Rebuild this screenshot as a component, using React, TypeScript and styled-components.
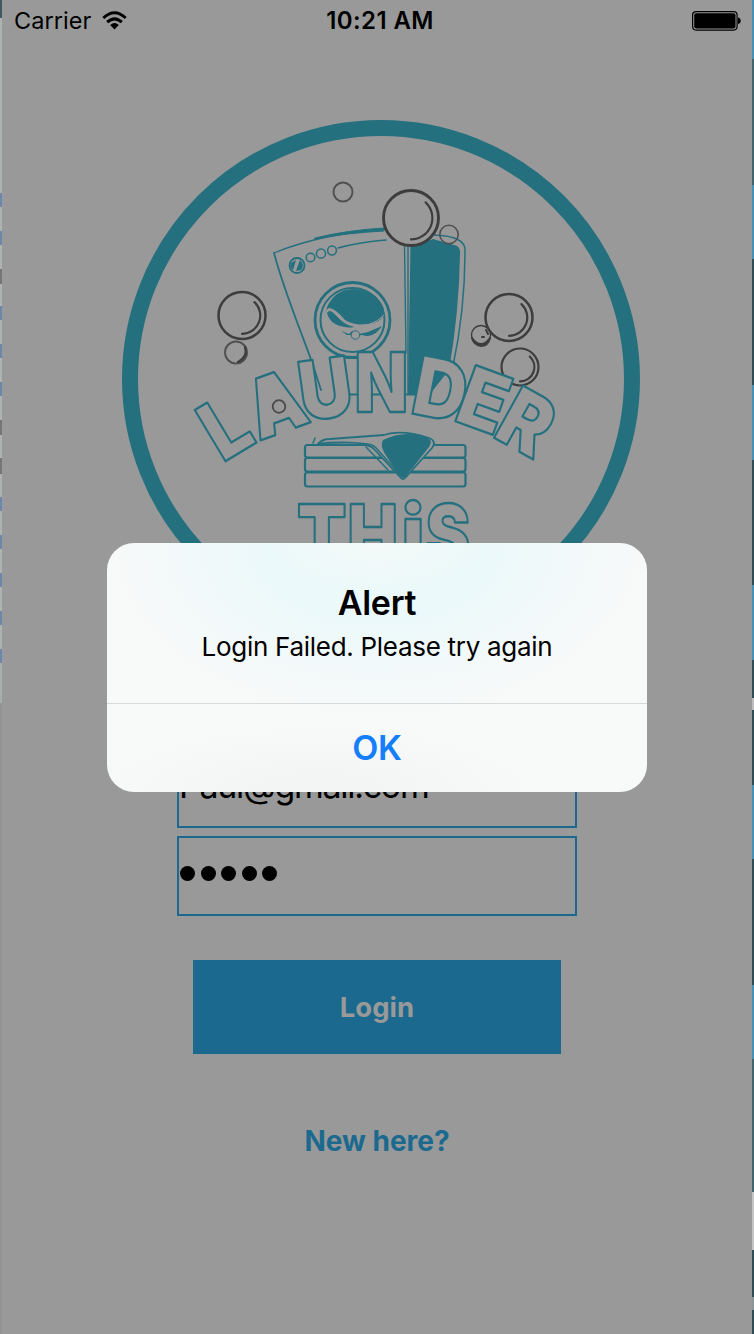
import React from "react";
import styled, { createGlobalStyle } from "styled-components";

const TEAL = "#24707f";
const BLUE = "#1b698e";
const GREY = "#999999";

const GlobalStyle = createGlobalStyle`
  * { box-sizing: border-box; }
  body { margin: 0; background: ${GREY}; }
  button { border: 0; padding: 0; background: none; font: inherit; }
`;

const Desktop = styled.div`
  position: relative;
  display: grid;
  grid-template-columns: 2px 750px 2px;
  width: 754px;
  height: 1334px;
  overflow: hidden;
  font-family: Inter, "Liberation Sans", sans-serif;
  color: #000;
`;

const Edge = styled.div`
  display: flex;
  flex-direction: column;
`;

const Segment = styled.div<{ $h: number; $c: string }>`
  flex: 0 0 ${(p) => p.$h}px;
  background: ${(p) => p.$c};
`;

const Screen = styled.main`
  display: flex;
  flex-direction: column;
  align-items: center;
  background: ${GREY};
  border-bottom-left-radius: 6px;
`;

const StatusBar = styled.header`
  display: grid;
  grid-template-columns: 1fr auto 1fr;
  align-items: center;
  width: 100%;
  height: 40px;
  padding: 1px 11px 0 12px;
`;

const Carrier = styled.div`
  display: flex;
  align-items: center;
  gap: 11px;
  font-size: 23.5px;
  line-height: 40px;
  letter-spacing: 0.05px;
`;

const Clock = styled.div`
  padding-left: 5px;
  font-size: 24px;
  line-height: 40px;
  font-weight: 600;
  letter-spacing: 0.4px;
`;

const Battery = styled.svg`
  justify-self: end;
`;

const Logo = styled.svg`
  flex: none;
  width: 520px;
  height: 520px;
  margin: 79px 0 0 8px;
`;

const Form = styled.form`
  display: flex;
  flex-direction: column;
  align-items: center;
  gap: 8px;
  margin-top: 109px;
`;

const Field = styled.div`
  display: flex;
  align-items: center;
  width: 400px;
  height: 80px;
  padding-bottom: 5px;
  border: 2px solid ${BLUE};
  font-size: 34px;
  letter-spacing: -1.3px;
`;

const Dots = styled.div`
  display: flex;
  gap: 5.5px;
  padding-left: 1px;
`;

const Dot = styled.span`
  width: 15px;
  height: 15px;
  border-radius: 50%;
  background: #000;
`;

const LoginButton = styled.button`
  width: 368px;
  height: 94px;
  margin-top: 36px;
  background: ${BLUE};
  color: ${GREY};
  font-size: 27.5px;
  font-weight: 700;
`;

const SignUp = styled.button`
  margin-top: 70px;
  color: ${BLUE};
  font-size: 28px;
  line-height: 35px;
  font-weight: 700;
`;

const AlertBox = styled.section`
  position: absolute;
  left: 107px;
  top: 543px;
  display: flex;
  flex-direction: column;
  width: 540px;
  height: 249px;
  border-radius: 27px;
  overflow: hidden;
  background:
    radial-gradient(ellipse 130px 55px at 270px 0, rgba(244, 250, 248, 0.9), rgba(244, 250, 248, 0)),
    radial-gradient(ellipse 270px 175px at 270px 0, #ebf9fa 40%, rgba(243, 249, 250, 0) 100%),
    radial-gradient(ellipse 230px 70px at 210px 249px, #f2f4f3, rgba(242, 244, 243, 0)),
    #f8f9f9;
`;

const AlertBody = styled.div`
  flex: 0 0 160px;
  padding-top: 38px;
  text-align: center;
`;

const AlertTitle = styled.h1`
  margin: 0;
  font-size: 34px;
  line-height: 44px;
  font-weight: 600;
  letter-spacing: -0.3px;
`;

const AlertText = styled.p`
  margin: 4px 0 0;
  font-size: 26px;
  line-height: 35px;
  letter-spacing: -0.29px;
`;

const AlertAction = styled.button`
  flex: 1;
  padding-bottom: 1px;
  border-top: 1px solid #d5d9d9;
  color: #147efb;
  font-size: 34px;
  font-weight: 600;
  letter-spacing: -0.3px;
`;

const Letter = styled.text`
  font-family: Inter, "Open Sans", sans-serif;
  font-weight: 900;
  font-size: 82px;
  fill: ${GREY};
  stroke: ${TEAL};
  stroke-width: 2.2px;
  stroke-linejoin: round;
  vector-effect: non-scaling-stroke;
`;

type Seg = [number, string];

const LIGHT = "#aeb2b2";
const MARK = "#6d87ac";
const leftEdge: Seg[] = [
  [18, "#3d5a63"], [175, LIGHT],
  [14, MARK], [24, LIGHT], [14, MARK], [24, LIGHT], [15, "#777577"], [22, LIGHT],
  [14, MARK], [24, LIGHT], [14, MARK], [24, LIGHT], [14, MARK], [24, LIGHT],
  [15, "#777577"], [23, LIGHT], [16, "#777577"], [23, LIGHT],
  [14, MARK], [24, LIGHT], [14, MARK], [24, LIGHT], [14, MARK], [24, LIGHT],
  [14, MARK], [24, LIGHT], [14, MARK], [40, "#a9adad"], [631, "#929494"],
];

const SKY = "#4790b5";
const SLATE = "#42656d";
const DEEP = "#304d55";
const rightEdge: Seg[] = [
  [59, SKY], [126, SLATE], [74, SKY], [126, DEEP], [75, SKY], [125, DEEP], [75, SKY],
  [38, DEEP], [12, "#bdbdbd"], [75, DEEP], [74, SKY], [126, DEEP], [74, SKY],
  [133, SLATE], [58, "#c4c4c4"], [47, DEEP], [13, "#8b9698"], [24, DEEP],
];

const letters: { ch: string; x: number; y: number; r: number; sx: number }[] = [
  { ch: "L", x: 222.5, y: 463, r: -31, sx: 0.9 },
  { ch: "A", x: 259, y: 441, r: -20, sx: 0.87 },
  { ch: "U", x: 303, y: 421.5, r: -8, sx: 0.9 },
  { ch: "N", x: 354.5, y: 412, r: 0, sx: 0.85 },
  { ch: "D", x: 409, y: 413, r: 11, sx: 0.9 },
  { ch: "E", x: 452, y: 420, r: 20, sx: 0.93 },
  { ch: "R", x: 491, y: 436, r: 29, sx: 0.9 },
  { ch: "T", x: 297, y: 564, r: 0, sx: 0.88 },
  { ch: "H", x: 347.5, y: 564, r: 0, sx: 0.82 },
  { ch: "i", x: 401.5, y: 564, r: 0, sx: 0.95 },
  { ch: "S", x: 425.5, y: 564, r: 0, sx: 0.82 },
];

const bubbles = [
  { x: 411, y: 218, r: 27.5, w: 2.9, shine: true },
  { x: 242, y: 315.5, r: 23.5, w: 2.5, shine: true },
  { x: 509, y: 317.5, r: 23.5, w: 2.5, shine: true },
  { x: 520, y: 367, r: 18.5, w: 2.2, shine: true },
  { x: 343, y: 192, r: 9.5, w: 1.9, shine: false },
  { x: 449, y: 234.5, r: 9.2, w: 1.6, shine: false },
  { x: 236, y: 352.5, r: 11, w: 1.9, shine: false },
];

function EdgeStrip({ parts }: { parts: Seg[] }) {
  return (
    <Edge>
      {parts.map(([h, c], i) => (
        <Segment key={i} $h={h} $c={c} />
      ))}
    </Edge>
  );
}

function BrandLogo() {
  return (
    <Logo viewBox="121 119 520 520" fill="none" stroke={TEAL} strokeLinecap="round" strokeLinejoin="round">
      <circle cx="381" cy="379" r="251" strokeWidth="16" />

      {/* washing machine */}
      <path d="M274 253 Q320 234 384 229" strokeWidth="1.3" />
      <path d="M315 238 Q348 230 384 228 L384 231 Q346 233 315 239Z" fill={TEAL} strokeWidth="1" />
      <path d="M338 248 Q360 242 386 240" strokeWidth="1.5" />
      <path d="M274 253 C284 291 302 334 313 365 L321 390" strokeWidth="1.8" />
      <path d="M404.500 246 L406 353 M408 246 L408 393" strokeWidth="1.4" />
      <path d="M410.500 246 L433 239 L454 245 Q461 246 460 255 Q459 313 449 370 L430 394 H408Z" fill={TEAL} stroke="none" />
      <path d="M434 235 Q466 236 465 251 Q465 310 453 366" strokeWidth="1.5" />
      <path d="M350 394.500H420 M347 358H361" strokeWidth="2" />
      <circle cx="297" cy="265.500" r="7.500" strokeWidth="1.8" />
      <path d="M300 260 L296 271 L301 270 Q305 265 300 260Z M291 263 L296 260 L293 270 Q289 267 291 263Z" fill={TEAL} stroke="none" />
      <circle cx="310.500" cy="257.500" r="4.300" strokeWidth="1.5" />
      <circle cx="321" cy="253.500" r="4.600" strokeWidth="1.5" />
      <circle cx="332" cy="250.500" r="4.400" strokeWidth="1.5" />
      <circle cx="352.500" cy="320" r="37.500" fill={GREY} strokeWidth="2.800" />
      <circle cx="352.500" cy="320" r="32" strokeWidth="2" />
      <path d="M325 313 Q332 289 354 289 Q377 290 384 309 Q385 319 374 323 Q356 327 345 320 Q335 308 329 308 Q325 310 325 313Z" fill={TEAL} stroke="none" />
      <path d="M327 313 Q330 325 345 327 Q350 328 354 327 Q342 323 336 315 Q330 308 327 313Z" fill={TEAL} stroke="none" />
      <path d="M326 312 C331 304 338 322 350 325 Q371 329 384 315" stroke={GREY} strokeWidth="1" />
      <path d="M341 331 L349 334 L352 331 L359 334 L368 332 L382 326 Q374 339 362 335 L347 335Z" fill={TEAL} stroke="none" />
      <circle cx="355.500" cy="335" r="4.300" fill={GREY} strokeWidth="1" />

      {/* bubbles */}
      <g stroke="#3d3d3d">
        {bubbles.map((b, i) => (
          <g key={i} transform={`translate(${b.x} ${b.y})`}>
            <circle r={b.r} strokeWidth={b.w} fill={b.r === 27.5 ? GREY : "none"} stroke={b.shine ? "#3d3d3d" : "#505050"} />
            {b.shine && (
              <path
                strokeWidth="2.2"
                d={`M${b.r * 0.53} ${-b.r * 0.57} A${b.r * 0.78} ${b.r * 0.78} 0 0 1 0 ${b.r * 0.78}`}
              />
            )}
          </g>
        ))}
        <path d="M245 347 Q248 357 238 362" strokeWidth="2.200" />
        <circle cx="481" cy="335" r="9.500" strokeWidth="1.400" />
        <path d="M472 338 Q481 350 490 338 Q488 346 481 346 Q474 345 472 338Z M482 337 L484 337 M486 330 L488 334" strokeWidth="2" fill="#303030" />
      </g>

      {letters.map((l) => (
        <g key={l.ch} transform={`translate(${l.x} ${l.y}) rotate(${l.r})`}>
          <Letter transform={`scale(${l.sx} 1)`}>{l.ch}</Letter>
          {l.ch === "A" && <path d="M27 -49 H31 L38 -21 H20Z" fill={GREY} stroke={GREY} strokeWidth="3" />}
        </g>
      ))}
      <circle cx="279" cy="406.500" r="6.300" stroke="#4a4a4a" strokeWidth="1.800" />

      {/* folded towels */}
      <g strokeWidth="2.200">
        <rect x="305" y="445" width="160.500" height="12.500" rx="2.500" />
        <rect x="305" y="458" width="160.500" height="13.500" rx="2.500" />
        <rect x="305" y="472.500" width="160.500" height="14" rx="2.500" />
      </g>
      <path d="M318 444 Q322 439 330 439 L384 435 Q402 429 429 438 Q437 441 432 448 L406 477 Q403 481 400 477 L374 449 Q370 445 364 445 L318 444Z" fill={GREY} strokeWidth="1.800" />
      <path d="M318 443.500 Q345 441 368 444 Q373 444 378 450 L401 476 M366 447 L388 470 M313 443 L315 438" strokeWidth="1.500" />
      <path d="M383 440 Q405 429 428 438 Q433 441 429 447 L407 475 Q403 481 399 475 L387 457 Q379 446 383 440Z" fill={TEAL} stroke="none" />
    </Logo>
  );
}

export default function App() {
  return (
    <>
      <GlobalStyle />
      <Desktop>
        <EdgeStrip parts={leftEdge} />
        <Screen>
          <StatusBar>
            <Carrier>
              Carrier
              <svg width="25" height="20" viewBox="0 0 25 20" fill="none" stroke="#000" strokeWidth="3">
                <path d="M1.300 7 Q12.500 -3.500 23.700 7" />
                <path d="M5.200 11.200 Q12.500 4.500 19.800 11.200" />
                <path d="M8.200 14 Q12.500 10.200 16.800 14 L12.500 18.600Z" fill="#000" stroke="none" />
              </svg>
            </Carrier>
            <Clock>10:21 AM</Clock>
            <Battery width="49" height="20" viewBox="0 0 49 20">
              <rect x="0.600" y="0.600" width="44.500" height="18.500" rx="3.500" fill="none" stroke="#000" strokeWidth="1.200" />
              <rect x="2.200" y="2.200" width="41.300" height="15.300" rx="2" />
              <path d="M46 6.500 Q48.700 7 48.700 9.750 Q48.700 12.500 46 13Z" />
            </Battery>
          </StatusBar>
          <BrandLogo />
          <Form>
            <Field>Paul@gmail.com</Field>
            <Field>
              <Dots>
                {[0, 1, 2, 3, 4].map((n) => (
                  <Dot key={n} />
                ))}
              </Dots>
            </Field>
            <LoginButton type="button">Login</LoginButton>
          </Form>
          <SignUp type="button">New here?</SignUp>
        </Screen>
        <EdgeStrip parts={rightEdge} />
        <AlertBox role="alertdialog">
          <AlertBody>
            <AlertTitle>Alert</AlertTitle>
            <AlertText>Login Failed. Please try again</AlertText>
          </AlertBody>
          <AlertAction type="button">OK</AlertAction>
        </AlertBox>
      </Desktop>
    </>
  );
}
